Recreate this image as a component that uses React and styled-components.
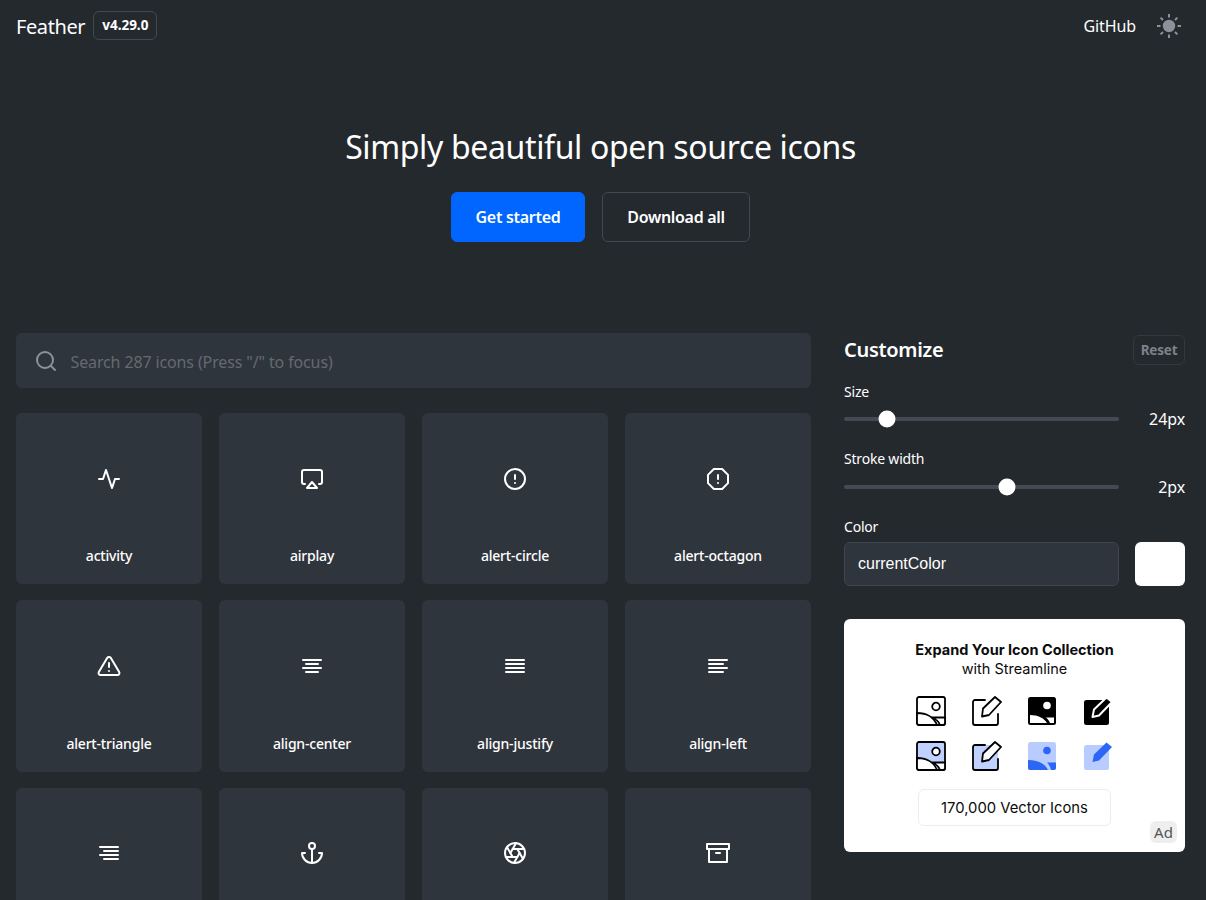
import React from "react";
import styled, { createGlobalStyle } from "styled-components";
import {
  FiActivity,
  FiAirplay,
  FiAlertCircle,
  FiAlertOctagon,
  FiAlertTriangle,
  FiAlignCenter,
  FiAlignJustify,
  FiAlignLeft,
  FiAlignRight,
  FiAnchor,
  FiAperture,
  FiArchive,
  FiSearch,
} from "react-icons/fi";

// the last row runs off the bottom of the window, its names are not in view
const icons = [
  ["activity", FiActivity],
  ["airplay", FiAirplay],
  ["alert-circle", FiAlertCircle],
  ["alert-octagon", FiAlertOctagon],
  ["alert-triangle", FiAlertTriangle],
  ["align-center", FiAlignCenter],
  ["align-justify", FiAlignJustify],
  ["align-left", FiAlignLeft],
  [null, FiAlignRight],
  [null, FiAnchor],
  [null, FiAperture],
  [null, FiArchive],
];

const SunIcon = () => (
  <svg width="26" height="26" viewBox="0 0 26 26" fill="#8b9299" stroke="#8b9299" strokeWidth="2">
    <circle cx="13" cy="13" r="6.2" stroke="none" />
    <path d="M13 1v3.5M13 21.5V25M1 13h3.5M21.5 13H25M4.6 4.6l2.4 2.4M19 19l2.4 2.4M4.6 21.4L7 19M19 7l2.4-2.4" />
  </svg>
);

const PictureIcon = ({ fill = "none" }) => (
  <svg width="30" height="30" viewBox="0 0 30 30" fill="none" stroke="#000" strokeWidth="1.8">
    <rect x="1" y="1" width="28" height="28" rx="2" fill={fill} />
    <circle cx="20" cy="10.5" r="3.8" fill="#fff" />
    <path d="M1 17c9 0 17 4 20 12H3a2 2 0 0 1-2-2z" fill="#fff" />
    <path d="M15.500 21.500H29V27a2 2 0 0 1-2 2h-3c-1-3-4-6-8.500-7.500z" fill="#fff" />
  </svg>
);

const PictureSolid = ({ base, accent }) => (
  <svg width="30" height="30" viewBox="0 0 30 30">
    <rect x="1" y="1" width="28" height="28" rx="2.500" fill={base} />
    <circle cx="20" cy="9.500" r="3.800" fill={accent} />
    <path d="M3 19c8 0 14 3 17 8H3z" fill={accent} />
    <path d="M19 21.500h8V27h-4c-1-2-2-4-4-5.500z" fill={accent} />
  </svg>
);

const PictureBlue = () => (
  <svg width="30" height="30" viewBox="0 0 30 30">
    <rect x="1" y="1" width="28" height="28" rx="2.500" fill="#b8ccff" />
    <circle cx="20" cy="9.500" r="3.800" fill="#2b66f6" />
    <path d="M1 19c9 0 17 3 20 10H3a2 2 0 0 1-2-2z" fill="#2b66f6" />
    <path d="M20 21.500h9V27a2 2 0 0 1-2 2h-3c-.6-3-2-5.500-4-7.500z" fill="#2b66f6" />
  </svg>
);

const EditIcon = ({ fill = "none" }) => (
  <svg width="30" height="30" viewBox="0 0 30 30" fill="none" stroke="#000" strokeWidth="1.8">
    {fill !== "none" && <rect x="1" y="4" width="25" height="25" rx="2" fill={fill} stroke="none" />}
    <path d="M13 4H3a2 2 0 0 0-2 2v21a2 2 0 0 0 2 2h21a2 2 0 0 0 2-2v-9" strokeLinecap="round" />
    <path d="M10 20.500l1-8L23 1l6 5-12 13z" fill="#fff" strokeLinejoin="round" />
  </svg>
);

const EditSolid = ({ base, accent, gap }) => (
  <svg width="30" height="30" viewBox="0 0 30 30">
    <rect x="1" y="4" width="25" height="25" rx="2.500" fill={base} />
    <path d="M9.500 21l1.500-7.500L23.500 1.500l5.500 4.500-13 13.500z" fill={accent} stroke={gap} strokeWidth="2" strokeLinejoin="round" />
  </svg>
);

const GlobalStyle = createGlobalStyle`
  html, body {
    margin: 0;
    height: 100%;
    overflow: hidden;
    background: #24292e;
  }
  * {
    box-sizing: border-box;
  }
  #root {
    height: 900px;
    overflow: hidden;
  }
`;

const Page = styled.div`
  padding: 0 21px 0 16px;
  color: #fff;
  font-family: "Noto Sans", "Open Sans", sans-serif;
`;

const Nav = styled.nav`
  display: flex;
  align-items: center;
  justify-content: space-between;
  height: 52px;
  padding-right: 3px;
`;

const NavGroup = styled.div`
  display: flex;
  align-items: center;
  gap: ${(p) => p.$gap}px;
`;

const Brand = styled.span`
  font-size: 20px;
  letter-spacing: -0.4px;
`;

const Version = styled.span`
  display: inline-flex;
  align-items: center;
  height: 29px;
  margin-top: -2px;
  padding: 0 8px;
  border: 1px solid #42484f;
  border-radius: 6px;
  font-size: 13.5px;
  font-weight: 700;
`;

const NavLink = styled.a`
  font-size: 16px;
  letter-spacing: -0.1px;
`;

const Hero = styled.section`
  display: flex;
  flex-direction: column;
  align-items: center;
  padding-top: 70px;
  height: 281px;
`;

const Title = styled.h1`
  margin: 0 0 20px;
  font-size: 32px;
  font-weight: 400;
  line-height: 50px;
  letter-spacing: -0.36px;
`;

const HeroActions = styled.div`
  display: flex;
  gap: 17px;
`;

const HeroButton = styled.button`
  width: ${(p) => p.$width}px;
  height: 50px;
  padding: 0;
  border: 1px solid ${(p) => (p.$primary ? "#0066ff" : "#42484f")};
  border-radius: 6px;
  background: ${(p) => (p.$primary ? "#0066ff" : "transparent")};
  color: #fff;
  font-family: inherit;
  font-size: 16px;
  font-weight: 600;
  letter-spacing: -0.3px;
`;

const Main = styled.main`
  display: grid;
  grid-template-columns: 795px 341px;
  justify-content: space-between;
`;

const SearchBar = styled.div`
  display: flex;
  align-items: center;
  gap: 13px;
  height: 55px;
  margin-bottom: 25px;
  padding: 0 17px 0 17.5px;
  border-radius: 6px;
  background: #2f353d;
  color: #8b9299;
`;

const SearchInput = styled.input`
  flex: 1;
  padding: 2px 0 0;
  border: 0;
  outline: 0;
  background: transparent;
  font-family: inherit;
  font-size: 16px;
  letter-spacing: -0.13px;
  &::placeholder {
    color: #646a71;
    opacity: 1;
  }
`;

const IconGrid = styled.div`
  display: grid;
  grid-template-columns: repeat(4, 1fr);
  gap: 16px 17px;
`;

const IconCard = styled.div`
  display: flex;
  flex-direction: column;
  align-items: center;
  height: 171.3px;
  padding: 53.6px 0 19px;
  border-radius: 6px;
  background: #2f353d;
`;

const IconName = styled.span`
  margin-top: auto;
  font-size: 14px;
  font-weight: 500;
  letter-spacing: -0.2px;
`;

const Sidebar = styled.aside`
  display: flex;
  flex-direction: column;
`;

const SidebarHeader = styled.div`
  display: flex;
  align-items: center;
  justify-content: space-between;
  height: 31px;
  margin: 1px 0 17px;
`;

const SidebarTitle = styled.h2`
  margin: 0;
  font-size: 20px;
  font-weight: 600;
  letter-spacing: -0.3px;
`;

const ResetButton = styled.button`
  width: 52px;
  height: 30px;
  padding: 0;
  border: 1px solid #33393f;
  border-radius: 6px;
  background: transparent;
  color: #7d8288;
  font-family: inherit;
  font-size: 13.5px;
  font-weight: 700;
  letter-spacing: -0.2px;
`;

const FieldLabel = styled.label`
  display: block;
  font-size: 14px;
  line-height: 20px;
  letter-spacing: -0.2px;
`;

const SliderRow = styled.div`
  display: flex;
  align-items: center;
  justify-content: space-between;
  height: ${(p) => p.$height}px;
  margin-bottom: 13px;
`;

const SliderTrack = styled.div`
  position: relative;
  width: 275px;
  height: 4px;
  border-radius: 2px;
  background: #434a53;
`;

const SliderThumb = styled.span`
  position: absolute;
  top: 50%;
  width: 17px;
  height: 17px;
  border-radius: 50%;
  background: #fff;
  transform: translate(-50%, -50%);
`;

const SliderValue = styled.span`
  font-size: 16px;
  letter-spacing: -0.1px;
`;

const ColorRow = styled.div`
  display: flex;
  justify-content: space-between;
  margin-top: 5px;
  margin-bottom: 33px;
`;

const ColorInput = styled.div`
  display: flex;
  align-items: center;
  width: 275px;
  height: 44px;
  padding: 0 13px;
  border: 1px solid #3f464e;
  border-radius: 6px;
  background: #2f353d;
  font-family: "Liberation Sans", Arial, sans-serif;
  font-size: 16px;
`;

const Swatch = styled.div`
  width: 50px;
  height: 44px;
  border-radius: 6px;
  background: #fff;
`;

const AdCard = styled.a`
  position: relative;
  display: flex;
  flex-direction: column;
  align-items: center;
  height: 233px;
  padding-top: 21px;
  border-radius: 6px;
  background: #fff;
  color: #0c0c0c;
  font-family: Inter, sans-serif;
`;

const AdTitle = styled.strong`
  font-size: 14.5px;
  line-height: 19px;
  font-weight: 700;
`;

const AdSubtitle = styled.span`
  font-size: 14.5px;
  line-height: 19px;
`;

const AdIcons = styled.div`
  display: grid;
  grid-template-columns: repeat(4, 30px);
  column-gap: 25.5px;
  row-gap: 15.5px;
  margin-top: 17.5px;
`;

const AdButton = styled.span`
  display: flex;
  align-items: center;
  justify-content: center;
  width: 193px;
  height: 37px;
  margin-top: 18px;
  padding-top: 1px;
  border: 1px solid #ececec;
  border-radius: 6px;
  font-size: 14.8px;
`;

const AdBadge = styled.span`
  position: absolute;
  right: 8px;
  bottom: 9px;
  width: 27px;
  height: 22px;
  border-radius: 6px;
  background: #eeeeee;
  color: #555;
  font-family: "Noto Sans", sans-serif;
  font-size: 15px;
  line-height: 22px;
  text-align: center;
`;

const Slider = ({ position, value, height }) => (
  <SliderRow $height={height}>
    <SliderTrack>
      <SliderThumb style={{ left: `${position}%` }} />
    </SliderTrack>
    <SliderValue>{value}</SliderValue>
  </SliderRow>
);

export default function App() {
  return (
    <Page>
      <GlobalStyle />
      <Nav>
        <NavGroup $gap={8}>
          <Brand>Feather</Brand>
          <Version>v4.29.0</Version>
        </NavGroup>
        <NavGroup $gap={20}>
          <NavLink>GitHub</NavLink>
          <SunIcon />
        </NavGroup>
      </Nav>
      <Hero>
        <Title>Simply beautiful open source icons</Title>
        <HeroActions>
          <HeroButton $primary $width={134}>Get started</HeroButton>
          <HeroButton $width={148}>Download all</HeroButton>
        </HeroActions>
      </Hero>
      <Main>
        <div>
          <SearchBar>
            <FiSearch size={24} />
            <SearchInput placeholder={'Search 287 icons (Press "/" to focus)'} />
          </SearchBar>
          <IconGrid>
            {icons.map(([name, Icon], i) => (
              <IconCard key={i}>
                <Icon size={24} />
                {name && <IconName>{name}</IconName>}
              </IconCard>
            ))}
          </IconGrid>
        </div>
        <Sidebar>
          <SidebarHeader>
            <SidebarTitle>Customize</SidebarTitle>
            <ResetButton>Reset</ResetButton>
          </SidebarHeader>
          <FieldLabel>Size</FieldLabel>
          <Slider position={15.7} value="24px" height={34} />
          <FieldLabel>Stroke width</FieldLabel>
          <Slider position={59.2} value="2px" height={35} />
          <FieldLabel>Color</FieldLabel>
          <ColorRow>
            <ColorInput>currentColor</ColorInput>
            <Swatch />
          </ColorRow>
          <AdCard>
            <AdTitle>Expand Your Icon Collection</AdTitle>
            <AdSubtitle>with Streamline</AdSubtitle>
            <AdIcons>
              <PictureIcon />
              <EditIcon />
              <PictureSolid base="#000" accent="#fff" />
              <EditSolid base="#000" accent="#000" gap="#fff" />
              <PictureIcon fill="#c0d0ff" />
              <EditIcon fill="#c0d0ff" />
              <PictureBlue />
              <EditSolid base="#b8ccff" accent="#2b66f6" gap="none" />
            </AdIcons>
            <AdButton>170,000 Vector Icons</AdButton>
            <AdBadge>Ad</AdBadge>
          </AdCard>
        </Sidebar>
      </Main>
    </Page>
  );
}
